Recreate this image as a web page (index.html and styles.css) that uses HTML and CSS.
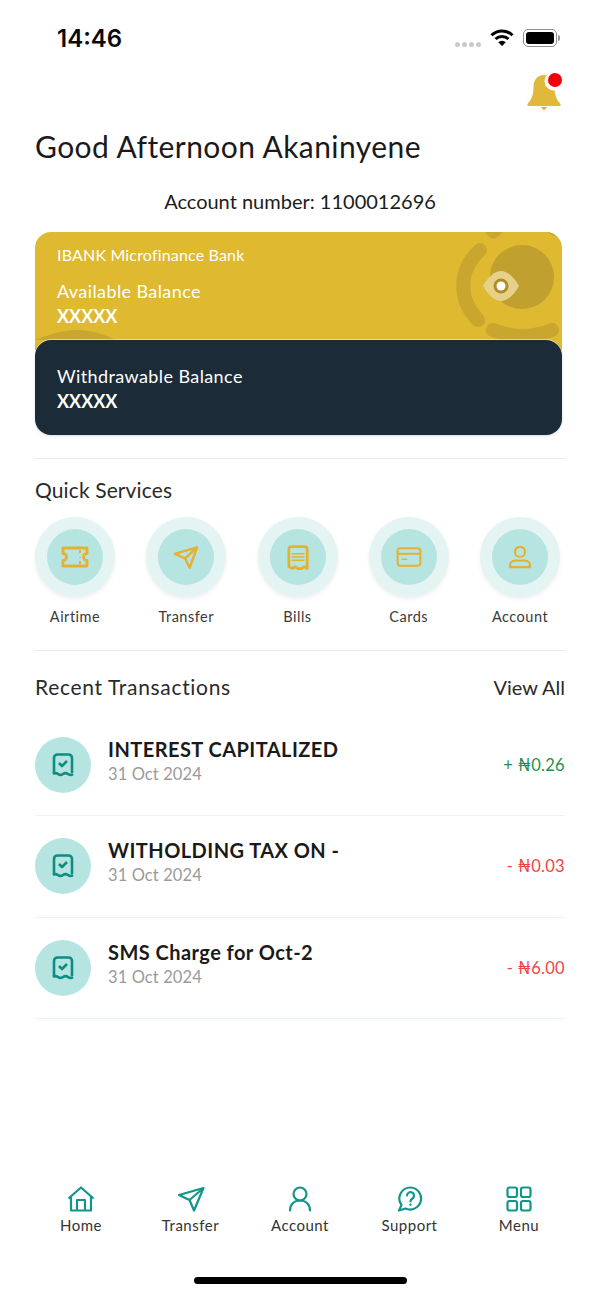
FILE: index.html
```html
<!DOCTYPE html>
<html lang="en">
<head>
  <meta charset="UTF-8">
  <meta name="viewport" content="width=device-width, initial-scale=1.0">
  <title>IBANK Home</title>
  <link rel="stylesheet" href="styles.css">
</head>
<body>
  <div class="screen">
    <!-- Status bar -->
    <div class="status-bar">
      <span class="time">14:46</span>
      <div class="status-icons">
        <div class="signal"><i></i><i></i><i></i><i></i></div>
        <svg class="wifi" width="24" height="18" viewBox="0 0 24 18">
          <path d="M1.500 6.200a15 15 0 0 1 21 0" fill="none" stroke="#000" stroke-width="3"/>
          <path d="M5.500 10a9.500 9.500 0 0 1 13 0" fill="none" stroke="#000" stroke-width="3"/>
          <path d="M8.200 13.200 12 17l3.800-3.800a5.400 5.400 0 0 0-7.600 0z" fill="#000"/>
        </svg>
        <div class="battery"><div class="battery-fill"></div></div>
        <div class="battery-cap"></div>
      </div>
    </div>

    <div class="bell-row">
      <svg width="36" height="40" viewBox="0 0 36 40">
        <path d="M18 3c-7 0-10.500 5-10.500 12 0 7-1.500 12-6 17v2h33v-2c-4.500-5-6-10-6-17 0-7-3.500-12-10.500-12z" fill="#e0b93b"/>
        <path d="M14.500 35h7l-3.500 3.500z" fill="#e0b93b"/>
        <circle cx="28" cy="9" r="9.500" fill="#fff"/>
        <circle cx="29" cy="8" r="7" fill="#f40009"/>
      </svg>
    </div>

    <h1 class="greeting">Good Afternoon Akaninyene</h1>
    <p class="account-number">Account number: 1100012696</p>

    <!-- Balance cards -->
    <div class="balance">
      <div class="card card-gold">
        <svg class="card-art" width="527" height="118" viewBox="0 0 527 118">
          <circle cx="487" cy="45" r="32" fill="#c0a02f"/>
          <path d="M445 18C423 38 423 68 443 88" fill="none" stroke="#c9a62e" stroke-width="14" stroke-linecap="round"/>
          <path d="M458 98Q487 110 517 98" fill="none" stroke="#c9a62e" stroke-width="14" stroke-linecap="round"/>
          <path d="M450 0h17q-2 5-9 7-5-2-8-7z" fill="#c9a62e"/>
          <path d="M512 0h11v5q-6-1-11-5z" fill="#c9a62e"/>
          <path d="M0 108C15 102 30 98 42 98S70 102 80 108z" fill="#c9a62e"/>
          <path d="M448 54C453 45 460 39 466 39S479 45 484 54C479 63 472 69 466 69S453 63 448 54z" fill="#e6d08a"/>
          <circle cx="466" cy="54" r="7.500" fill="#b08c22"/>
          <circle cx="466" cy="54" r="4.500" fill="#fff"/>
        </svg>
        <p class="bank-name">IBANK Microfinance Bank</p>
        <p class="balance-label">Available Balance</p>
        <p class="balance-value">XXXXX</p>
      </div>
      <div class="card card-dark">
        <p class="balance-label">Withdrawable Balance</p>
        <p class="balance-value">XXXXX</p>
      </div>
    </div>

    <hr class="divider divider-services">

    <h2 class="section-title">Quick Services</h2>
    <div class="services">
      <div class="service">
        <div class="service-ring"><div class="service-disc">
          <svg width="28" height="22" viewBox="0 0 28 22" fill="none" stroke="#e4b133" stroke-width="2.800" stroke-linejoin="round">
            <path d="M2 2h24v5.500a3.500 3.500 0 0 0 0 7V20H2v-5.500a3.500 3.500 0 0 0 0-7z"/>
            <path d="M19 4v3m0 4v1m0 3v3" stroke-width="2"/>
          </svg>
        </div></div>
        <span>Airtime</span>
      </div>
      <div class="service">
        <div class="service-ring"><div class="service-disc">
          <svg width="26" height="25" viewBox="0 0 28 26" fill="none" stroke="#e4b133" stroke-width="2.600" stroke-linejoin="round">
            <path d="M2 9 26 2l-8 22-5-10z"/>
            <path d="M13 14 26 2"/>
          </svg>
        </div></div>
        <span>Transfer</span>
      </div>
      <div class="service">
        <div class="service-ring"><div class="service-disc">
          <svg width="22" height="27" viewBox="0 0 24 28" fill="none" stroke="#e4b133" stroke-width="3" stroke-linejoin="round">
            <path d="M2 5a3 3 0 0 1 3-3h14a3 3 0 0 1 3 3v21l-3-2-3 2h-4l-3-2-3 2-4-2z"/>
            <path d="M5 10h14M5 13.500h14M5 17h14" stroke-width="1.600"/>
          </svg>
        </div></div>
        <span>Bills</span>
      </div>
      <div class="service">
        <div class="service-ring"><div class="service-disc">
          <svg width="26" height="20" viewBox="0 0 28 22" fill="none" stroke="#e4b133" stroke-width="2.200">
            <rect x="1.500" y="1.500" width="25" height="19" rx="3"/>
            <path d="M1.500 7.500h25"/>
            <path d="M6 13.500h6" stroke-width="1.600"/>
          </svg>
        </div></div>
        <span>Cards</span>
      </div>
      <div class="service">
        <div class="service-ring"><div class="service-disc">
          <svg width="22" height="24" viewBox="0 0 24 26" fill="none" stroke="#e4b133" stroke-width="2.400">
            <circle cx="12" cy="7.500" r="5.500"/>
            <path d="M6 17h12c3 0 5 3 5 6v1H1v-1c0-3 2-6 5-6z" stroke-linejoin="round"/>
          </svg>
        </div></div>
        <span>Account</span>
      </div>
    </div>

    <hr class="divider divider-recent">

    <div class="recent-head">
      <h2 class="section-title">Recent Transactions</h2>
      <a class="view-all">View All</a>
    </div>

    <!-- Transactions -->
    <div class="transactions">
      <div class="tx">
        <div class="tx-icon">
          <svg width="22" height="24" viewBox="0 0 22 24" fill="none" stroke="#0e8d83" stroke-width="2.600" stroke-linejoin="round">
            <path d="M2 20V5a3.500 3.500 0 0 1 3.500-3.500h11A3.500 3.500 0 0 1 20 5v15"/>
            <path d="M1 21c2-1.500 3-1.500 5 0s3 1.500 5 0 3-1.500 5 0 3 1.500 5 0"/>
            <path d="m7 10 3 3 5-5"/>
          </svg>
        </div>
        <div class="tx-info">
          <div class="tx-title">INTEREST CAPITALIZED</div>
          <div class="tx-date">31 Oct 2024</div>
        </div>
        <div class="tx-amount credit">+ ₦0.26</div>
      </div>
      <div class="tx">
        <div class="tx-icon">
          <svg width="22" height="24" viewBox="0 0 22 24" fill="none" stroke="#0e8d83" stroke-width="2.600" stroke-linejoin="round">
            <path d="M2 20V5a3.500 3.500 0 0 1 3.500-3.500h11A3.500 3.500 0 0 1 20 5v15"/>
            <path d="M1 21c2-1.500 3-1.500 5 0s3 1.500 5 0 3-1.500 5 0 3 1.500 5 0"/>
            <path d="m7 10 3 3 5-5"/>
          </svg>
        </div>
        <div class="tx-info">
          <div class="tx-title">WITHOLDING TAX ON -</div>
          <div class="tx-date">31 Oct 2024</div>
        </div>
        <div class="tx-amount debit">- ₦0.03</div>
      </div>
      <div class="tx">
        <div class="tx-icon">
          <svg width="22" height="24" viewBox="0 0 22 24" fill="none" stroke="#0e8d83" stroke-width="2.600" stroke-linejoin="round">
            <path d="M2 20V5a3.500 3.500 0 0 1 3.500-3.500h11A3.500 3.500 0 0 1 20 5v15"/>
            <path d="M1 21c2-1.500 3-1.500 5 0s3 1.500 5 0 3-1.500 5 0 3 1.500 5 0"/>
            <path d="m7 10 3 3 5-5"/>
          </svg>
        </div>
        <div class="tx-info">
          <div class="tx-title">SMS Charge for Oct-2</div>
          <div class="tx-date">31 Oct 2024</div>
        </div>
        <div class="tx-amount debit">- ₦6.00</div>
      </div>
    </div>

    <!-- Bottom nav -->
    <nav class="tabbar">
      <div class="tab">
        <svg width="28" height="26" viewBox="0 0 28 26" fill="none" stroke="#12968a" stroke-width="2.200" stroke-linejoin="round">
          <path d="M1.500 12.500 14 1.500l12.500 11"/>
          <path d="M4 10.500V24.500h20V10.500"/>
          <path d="M10 24.500V14h8v10.500"/>
        </svg>
        <span>Home</span>
      </div>
      <div class="tab">
        <svg width="28" height="26" viewBox="0 0 28 26" fill="none" stroke="#12968a" stroke-width="2.200" stroke-linejoin="round">
          <path d="M2 9 26.500 2 17 24.500 12.500 14z"/>
          <path d="M12.500 14 26.500 2"/>
        </svg>
        <span>Transfer</span>
      </div>
      <div class="tab">
        <svg width="24" height="26" viewBox="0 0 24 26" fill="none" stroke="#12968a" stroke-width="2.200" stroke-linecap="round">
          <circle cx="12" cy="8" r="6.500"/>
          <path d="M2 24.500c0-6 4-10 10-10s10 4 10 10"/>
        </svg>
        <span>Account</span>
      </div>
      <div class="tab">
        <svg width="26" height="26" viewBox="0 0 26 26" fill="none" stroke="#12968a" stroke-width="2.200">
          <path d="M13.500 1.500a11 11 0 1 1-5 21L2 24.500l2.500-5.500a11 11 0 0 1 9-17.500z" stroke-linejoin="round"/>
          <path d="M10 9.500a3.500 3.500 0 1 1 5.500 3c-1.500 1-2 1.500-2 3" stroke-linecap="round"/>
          <circle cx="13.500" cy="18.700" r=".8" fill="#12968a" stroke-width="1"/>
        </svg>
        <span>Support</span>
      </div>
      <div class="tab">
        <svg width="26" height="26" viewBox="0 0 26 26" fill="none" stroke="#12968a" stroke-width="2.200">
          <rect x="1.500" y="1.500" width="9.500" height="9.500" rx="2"/>
          <rect x="15" y="1.500" width="9.500" height="9.500" rx="2"/>
          <rect x="1.500" y="15" width="9.500" height="9.500" rx="2"/>
          <rect x="15" y="15" width="9.500" height="9.500" rx="2"/>
        </svg>
        <span>Menu</span>
      </div>
    </nav>
    <div class="home-indicator"></div>
  </div>
</body>
</html>
```

FILE: styles.css
```css
* {
  box-sizing: border-box;
}

body {
  margin: 0;
  background: #fff;
  color: #1c1c1c;
  font-family: Lato, "Open Sans", sans-serif;
}

p, h1, h2 {
  margin: 0;
  font-weight: 400;
}

.screen {
  width: 600px;
  height: 1300px;
  padding: 0 35px;
  display: flex;
  flex-direction: column;
}

/* status bar */
.status-bar {
  height: 72px;
  padding: 24px 5px 0 22px;
  display: flex;
  justify-content: space-between;
  align-items: flex-start;
}

.time {
  font-family: Inter, sans-serif;
  font-size: 24px;
  font-weight: 600;
  line-height: 29px;
  color: #0a0a0a;
}

.status-icons {
  display: flex;
  align-items: center;
  margin-top: 5px;
}

.signal {
  display: flex;
  gap: 2px;
  margin: 12px 9px 0 0;
}

.signal i {
  width: 5px;
  height: 5px;
  border-radius: 50%;
  background: #c9c9c9;
}

.wifi {
  margin-right: 9px;
}

.battery {
  width: 34px;
  height: 18px;
  padding: 2px;
  border: 1px solid #8e8e8e;
  border-radius: 5px;
}

.battery-fill {
  height: 100%;
  background: #000;
  border-radius: 3px;
}

.battery-cap {
  width: 2px;
  height: 6px;
  margin-left: 1px;
  background: #9a9a9a;
  border-radius: 0 2px 2px 0;
}

.bell-row {
  height: 40px;
  display: flex;
  justify-content: flex-end;
  padding-right: 3px;
}

/* heading */
.greeting {
  margin-top: 15px;
  font-size: 30px;
  line-height: 38px;
  color: #1a1a1a;
  letter-spacing: 0.43px;
}

.account-number {
  margin-top: 23px;
  font-size: 20px;
  line-height: 26px;
  text-align: center;
}

/* balance cards */
.balance {
  margin-top: 18px;
  width: 527px;
}

.card {
  position: relative;
  overflow: hidden;
  padding-left: 22px;
  color: #fff;
}

.card-gold {
  height: 118px;
  padding-top: 13px;
  background: #dfb92f;
  border-radius: 16px 16px 0 0;
}

.card-dark {
  height: 95px;
  margin-top: -10px;
  padding-top: 24px;
  background: #1b2b38;
  border-radius: 16px;
  box-shadow: 0 -1px 0 rgba(255, 255, 255, 0.5), 0 1px 3px rgba(120, 150, 180, 0.3);
}

.card-art {
  position: absolute;
  top: 0;
  left: 0;
}

.bank-name {
  position: relative;
  font-size: 16px;
  line-height: 20px;
  letter-spacing: 0.17px;
}

.balance-label {
  position: relative;
  font-size: 18px;
  line-height: 24px;
  letter-spacing: 0.4px;
}

.bank-name + .balance-label {
  margin-top: 14px;
}

.balance-value {
  position: relative;
  font-size: 18px;
  font-weight: 700;
  line-height: 24px;
  margin-top: 1px;
}

.divider {
  width: 530px;
  margin: 0;
  border: 0;
  border-top: 1px solid #e6ecec;
}

.divider-services {
  margin-top: 23px;
}

.section-title {
  font-size: 21px;
  line-height: 26px;
  color: #2a2a2a;
  letter-spacing: 0.12px;
}

.divider-services + .section-title {
  margin-top: 18px;
}

/* quick services */
.services {
  margin-top: 14px;
  width: 530px;
  display: grid;
  grid-template-columns: repeat(5, 80px);
  justify-content: space-between;
  padding-right: 5px;
}

.service {
  display: flex;
  flex-direction: column;
  align-items: center;
  font-size: 14.500px;
  color: #3a3a3a;
  letter-spacing: 0.5px;
}

.service span {
  margin-top: 11px;
  line-height: 18px;
}

.service-ring {
  width: 80px;
  height: 80px;
  border-radius: 50%;
  background: #e4f4f3;
  box-shadow: 0 2px 4px rgba(0, 0, 0, 0.07);
  display: flex;
  align-items: center;
  justify-content: center;
}

.service-disc {
  width: 56px;
  height: 56px;
  border-radius: 50%;
  background: #b6e4e1;
  display: flex;
  align-items: center;
  justify-content: center;
}

.divider-recent {
  margin-top: 24px;
}

.recent-head {
  width: 530px;
  margin-top: 23px;
  display: flex;
  justify-content: space-between;
  align-items: center;
}

.recent-head .section-title {
  letter-spacing: 0.68px;
}

.view-all {
  font-size: 20px;
  line-height: 26px;
  color: #2a2a2a;
}

/* transactions */
.transactions {
  width: 530px;
  margin-top: 14px;
}

.tx {
  height: 101.500px;
  display: flex;
  align-items: center;
  border-bottom: 1px solid #eaf5f4;
}

.tx:first-child {
  height: 102px;
}

.tx-icon {
  width: 56px;
  height: 56px;
  border-radius: 50%;
  background: #b6e4e1;
  display: flex;
  align-items: center;
  justify-content: center;
}

.tx-info {
  flex: 1;
  margin-left: 17px;
  padding-bottom: 7px;
}

.tx-title {
  font-size: 20px;
  font-weight: 700;
  line-height: 25px;
  color: #1a1a1a;
  letter-spacing: 0.45px;
}

.tx-date {
  font-size: 16.500px;
  line-height: 24px;
  color: #9a9a9a;
  letter-spacing: 0.1px;
}

.tx-amount {
  font-size: 16.500px;
  letter-spacing: 0.3px;
}

.credit {
  color: #1d8f4e;
}

.debit {
  color: #ef4444;
}

/* bottom nav */
.tabbar {
  margin-top: auto;
  display: grid;
  grid-template-columns: repeat(5, 109.500px);
  justify-content: center;
}

.tab {
  display: flex;
  flex-direction: column;
  align-items: center;
  font-size: 15px;
  color: #333;
  letter-spacing: 0.5px;
}

.tab span {
  margin-top: 3px;
  line-height: 20px;
}

.home-indicator {
  width: 213px;
  height: 7px;
  margin: 42px auto 16px;
  background: #000;
  border-radius: 4px;
  flex-shrink: 0;
}
```
